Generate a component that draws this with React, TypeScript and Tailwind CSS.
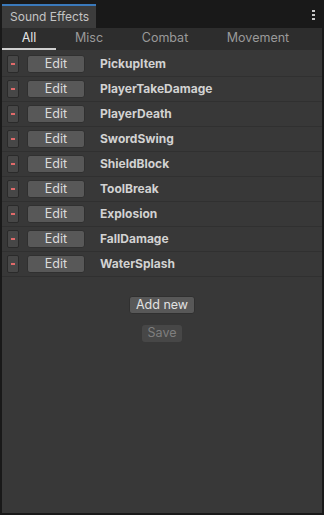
import React, { useState } from "react";

const SOUNDS = [
  "PickupItem",
  "PlayerTakeDamage",
  "PlayerDeath",
  "SwordSwing",
  "ShieldBlock",
  "ToolBreak",
  "Explosion",
  "FallDamage",
  "WaterSplash",
];

const TABS = [
  { label: "All", width: "w-[54px]" },
  { label: "Misc", width: "w-[66px]" },
  { label: "Combat", width: "w-[86px]" },
  { label: "Movement", width: "w-[100px]" },
];

const App: React.FC = () => {
  const [activeTab, setActiveTab] = useState("All");

  return (
    <div className="w-[324px] h-[515px] bg-[#191919] flex flex-col font-['Inter',sans-serif] text-[12px] select-none">
      {/* Window header */}
      <div className="h-[28px] flex items-end pl-[2px] pr-[9px] shrink-0">
        <div className="w-[94px] h-[24px] bg-[#3c3c3c] border-t-2 border-[#3a79bb] flex items-center pl-[8px] text-[#c4c4c4] text-[12px]">
          Sound Effects
        </div>
        <div className="ml-auto self-center mt-[2px] flex flex-col gap-[2px]">
          <span className="block w-[3px] h-[2px] bg-[#c8c8c8]" />
          <span className="block w-[3px] h-[2px] bg-[#c8c8c8]" />
          <span className="block w-[3px] h-[2px] bg-[#c8c8c8]" />
        </div>
      </div>

      <div className="mx-[2px] mb-[2px] flex-1 bg-[#383838] flex flex-col">
        {/* Category tabs */}
        <div className="h-[22px] bg-[#2d2d2d] flex shrink-0">
          {TABS.map((tab) => (
            <button
              key={tab.label}
              onClick={() => setActiveTab(tab.label)}
              className={`${tab.width} h-full flex items-center justify-center text-[12.5px] border-b-2 ${
                activeTab === tab.label
                  ? "text-[#e4e4e4] border-[#d0d0d0]"
                  : "text-[#9a9a9a] border-transparent"
              }`}
            >
              {tab.label}
            </button>
          ))}
        </div>

        {/* Sound list */}
        <div className="flex flex-col mt-[2px]">
          {SOUNDS.map((name) => (
            <div
              key={name}
              className="h-[25px] flex items-center border-b border-[#303030] pl-[5px]"
            >
              <button className="w-[12px] h-[18px] rounded-[2px] bg-[#474747] border border-[#2a2a2a] flex items-center justify-center">
                <span className="block w-[4px] h-[2px] bg-[#e06a6a]" />
              </button>
              <button className="ml-[8px] w-[58px] h-[18px] rounded-[3px] bg-[#585858] border border-[#303030] text-[#dcdcdc] text-[12.5px] flex items-center justify-center">
                Edit
              </button>
              <span className="ml-[15px] font-bold text-[#d2d2d2] text-[12px]">
                {name}
              </span>
            </div>
          ))}
        </div>

        {/* Actions */}
        <div className="flex flex-col items-center pt-[19px] gap-[11px]">
          <button className="h-[18px] px-[6px] rounded-[3px] bg-[#585858] border border-[#303030] text-[#e2e2e2] text-[12.5px] flex items-center">
            Add new
          </button>
          <button className="h-[17px] w-[40px] rounded-[3px] bg-[#474747] text-[#7f7f7f] text-[12.5px] flex items-center justify-center">
            Save
          </button>
        </div>
      </div>
    </div>
  );
};

export default App;
